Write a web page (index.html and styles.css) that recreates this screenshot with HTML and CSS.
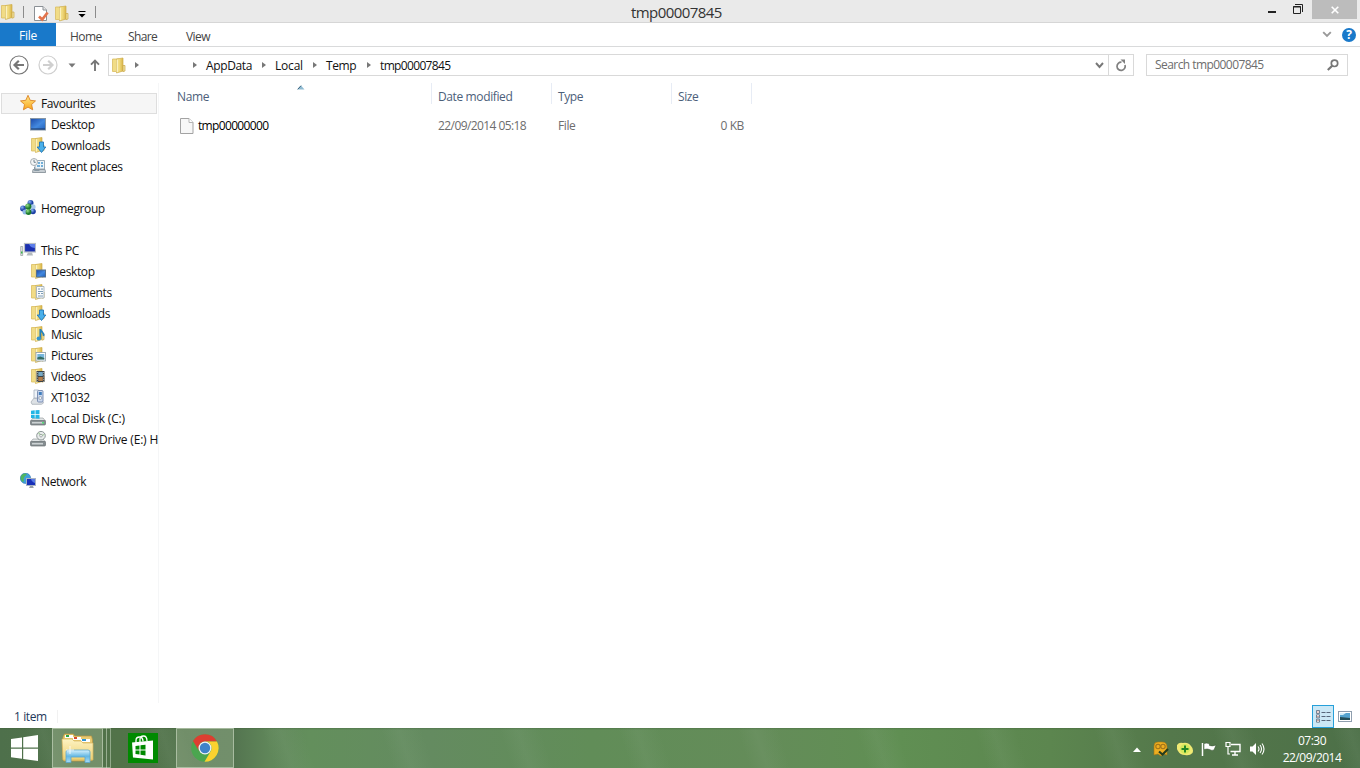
FILE: index.html
```
<!DOCTYPE html>
<html lang="en">
  <head>
    <meta charset="UTF-8" />
    <title>tmp00007845</title>
    <link rel="stylesheet" href="styles.css">
  </head>
  <body>
    <!-- shared icon parts -->
    <svg class="defs" width="0" height="0">
      <defs>
        <linearGradient id="gFolder" x1="0" x2="1">
          <stop offset="0" stop-color="#f8e896" />
          <stop offset="0.5" stop-color="#eed678" />
          <stop offset="1" stop-color="#d9b548" />
        </linearGradient>
        <linearGradient id="gScreen" x1="0" y1="0" x2="1" y2="1">
          <stop offset="0" stop-color="#1c49a8" />
          <stop offset="0.55" stop-color="#4389df" />
          <stop offset="1" stop-color="#205fb9" />
        </linearGradient>
        <linearGradient id="gStar" x1="0" y1="0" x2="0" y2="1">
          <stop offset="0" stop-color="#ffe98b" />
          <stop offset="1" stop-color="#f9a51b" />
        </linearGradient>
        <linearGradient id="gBig" x1="0" y1="0" x2="0" y2="1">
          <stop offset="0" stop-color="#fdf3c3" />
          <stop offset="1" stop-color="#edd072" />
        </linearGradient>
        <linearGradient id="gGlass" x1="0" y1="0" x2="0" y2="1">
          <stop offset="0" stop-color="#d8f2fd" />
          <stop offset="0.5" stop-color="#65b8e3" />
          <stop offset="1" stop-color="#a8dcf5" />
        </linearGradient>
        <radialGradient id="gBlue" cx="0.35" cy="0.3">
          <stop offset="0" stop-color="#8ab7f5" />
          <stop offset="1" stop-color="#1c3fa4" />
        </radialGradient>
        <radialGradient id="gGreen" cx="0.35" cy="0.3">
          <stop offset="0" stop-color="#98e087" />
          <stop offset="1" stop-color="#1c7a2c" />
        </radialGradient>
        <symbol id="folder" viewBox="0 0 16 16">
          <path d="M1.500 1.500h6.500v12.500H1.500z" fill="#f1dc86" stroke="#d9bd61" stroke-width=".8" />
          <path d="M5.500 1.500L12 .5v13l-6.500 2z" fill="url(#gFolder)" stroke="#cfae4c" stroke-width=".7" />
          <path d="M12 8h2v5.500l-2 .7z" fill="#f3e3a0" stroke="#c8a848" stroke-width=".7" />
          <path d="M6.200 2.200v12.300" stroke="#fffbe0" stroke-width=".9" />
        </symbol>
        <symbol id="arrowDown" viewBox="0 0 16 16">
          <path d="M9.500 5h4v5h2.300L11.500 15.500 7.200 10h2.300z" fill="#49b0ea" stroke="#2176b8" stroke-width=".9" />
        </symbol>
        <symbol id="drive" viewBox="0 0 16 16">
          <path d="M3 8h10l2.500 3h-15z" fill="#e2e5e6" stroke="#8c9193" stroke-width=".6" />
          <rect x=".5" y="10.500" width="15" height="4.500" rx="1" fill="#858d90" stroke="#6a7174" stroke-width=".7" />
          <path d="M2 12.700h11" stroke="#cdd2d4" stroke-width="1.600" />
        </symbol>
      </defs>
    </svg>

    <div class="titlebar">
      <div class="quick">
        <svg class="q-folder" width="16" height="18"><use href="#folder" width="16" height="18" /></svg>
        <span class="sep"></span>
        <svg class="q-props" width="16" height="17" viewBox="0 0 16 17">
          <path d="M1.500 1.500h8.500l3.500 3.500v10.500h-12z" fill="#fff" stroke="#8b9095" />
          <path d="M10 1.500v3.500h3.500" fill="#e6e6e6" stroke="#8b9095" />
          <path d="M6 11.500l3.200 3L14.600 7.500" fill="none" stroke="#e3744c" stroke-width="2.700" />
        </svg>
        <svg class="q-new" width="16" height="17"><use href="#folder" width="16" height="17" /></svg>
        <svg class="q-more" width="8" height="7" viewBox="0 0 8 7">
          <path d="M.5.5h7" stroke="#000" />
          <path d="M.5 3h7L4 6.500z" />
        </svg>
        <span class="sep"></span>
      </div>
      <div class="title">tmp00007845</div>
      <div class="win-buttons">
        <svg class="min" width="8" height="2"><rect width="8" height="2" fill="#222" /></svg>
        <svg class="max" width="10" height="10" viewBox="0 0 10 10">
          <path d="M.5 2.500h7v7h-7zM0 3h8" fill="none" stroke="#222" />
          <path d="M2 .5h7.500V8" fill="none" stroke="#222" />
        </svg>
        <button class="close">
          <svg width="8" height="8" viewBox="0 0 8 8"><path d="M.7.7l6.600 6.600M7.300.7L.7 7.300" stroke="#fff" stroke-width="1.600" /></svg>
        </button>
      </div>
    </div>

    <div class="ribbon">
      <div class="tab file">File</div>
      <div class="tab home">Home</div>
      <div class="tab share">Share</div>
      <div class="tab view">View</div>
      <div class="ribbon-right">
        <svg width="10" height="7" viewBox="0 0 10 7"><path d="M1.200 1.200L5 5l3.800-3.800" fill="none" stroke="#999" stroke-width="1.900" /></svg>
        <span class="help">?</span>
      </div>
    </div>

    <div class="navbar">
      <div class="nav-buttons">
        <svg class="back" width="20" height="20" viewBox="0 0 20 20">
          <circle cx="10" cy="10" r="9" fill="none" stroke="#777" stroke-width="1.200" />
          <path d="M15 10H6M9.800 5.700L5.500 10l4.300 4.300" fill="none" stroke="#777" stroke-width="2.200" />
        </svg>
        <svg class="forward" width="20" height="20" viewBox="0 0 20 20">
          <circle cx="10" cy="10" r="9" fill="none" stroke="#cfcfcf" stroke-width="1.200" />
          <path d="M5 10h9M10.200 5.700l4.300 4.300-4.300 4.300" fill="none" stroke="#cfcfcf" stroke-width="2.200" />
        </svg>
        <svg class="history" width="8" height="5" viewBox="0 0 8 5"><path d="M.5.5h7L4 4.500z" fill="#777" /></svg>
        <svg class="up" width="10" height="12" viewBox="0 0 10 12"><path d="M5 12V2M1 5.700L5 1.700l4 4" fill="none" stroke="#777" stroke-width="1.900" /></svg>
      </div>
      <div class="address">
        <svg class="a-folder" width="16" height="17"><use href="#folder" width="16" height="17" /></svg>
        <i class="arrow first"></i>
        <i class="arrow second"></i>
        <span class="crumb c1">AppData</span><i class="arrow"></i>
        <span class="crumb c2">Local</span><i class="arrow"></i>
        <span class="crumb c3">Temp</span><i class="arrow"></i>
        <span class="crumb c4">tmp00007845</span>
        <div class="address-end">
          <svg class="drop" width="9" height="7" viewBox="0 0 9 7"><path d="M1 1l3.500 4L8 1" fill="none" stroke="#777" stroke-width="1.900" /></svg>
          <div class="refresh">
            <svg width="12" height="13" viewBox="0 0 12 13">
              <path d="M6.500 3.200A4.100 4.100 0 1 0 10 6" fill="none" stroke="#808080" stroke-width="1.700" />
              <path d="M5.500.5h4.500v4.500z" fill="#808080" />
            </svg>
          </div>
        </div>
      </div>
      <div class="search">
        <span>Search tmp00007845</span>
        <svg width="12" height="12" viewBox="0 0 12 12">
          <circle cx="7.500" cy="4.300" r="3.200" fill="none" stroke="#777" stroke-width="1.700" />
          <path d="M5.200 6.700L.8 11" stroke="#777" stroke-width="2.200" />
        </svg>
      </div>
    </div>

    <div class="main">
      <div class="sidebar">
        <div class="item root selected">
          <svg width="16" height="16" viewBox="0 0 16 16"><path d="M8 .3l2.200 5 5.300.6-3.900 3.600 1.100 5.300L8 12.100l-4.600 2.700 1.100-5.300L.5 5.900l5.300-.6z" fill="url(#gStar)" stroke="#dc8426" stroke-width=".9" /></svg>
          <span>Favourites</span>
        </div>
        <div class="item">
          <svg width="16" height="16" viewBox="0 0 16 16"><rect x=".5" y="2.500" width="15" height="11.500" fill="url(#gScreen)" stroke="#8595a5" /><path d="M1 13h14" stroke="#193766" /></svg>
          <span>Desktop</span>
        </div>
        <div class="item">
          <svg width="16" height="16"><use href="#folder" /><use href="#arrowDown" /></svg>
          <span>Downloads</span>
        </div>
        <div class="item">
          <svg width="16" height="16" viewBox="0 0 16 16">
            <path d="M5 2.500h9.500v8.500H5z" fill="#edf4f8" stroke="#8598a5" stroke-width=".8" />
            <path d="M8 5h2m1 0h2M7 8h3m1 0h2" stroke="#4897cc" stroke-width="1.400" />
            <path d="M3 11.500h12l.7 3H2.500z" fill="#c7ced3" stroke="#7e8990" stroke-width=".8" />
            <circle cx="4" cy="4" r="3.500" fill="#f3f5f6" stroke="#a0a8ad" stroke-width=".9" />
            <path d="M4 1.800v2.500h1.800" fill="none" stroke="#526773" stroke-width=".8" />
            <path d="M4.500 9v3.500h5" fill="none" stroke="#899aa5" />
          </svg>
          <span>Recent places</span>
        </div>

        <div class="item root group">
          <svg width="16" height="16" viewBox="0 0 16 16">
            <circle cx="10.500" cy="3" r="3" fill="url(#gBlue)" />
            <circle cx="3" cy="8.500" r="2.900" fill="url(#gBlue)" />
            <circle cx="12.900" cy="7" r="2.700" fill="#a9c9e9" />
            <circle cx="13" cy="11.500" r="2.800" fill="url(#gBlue)" />
            <circle cx="5" cy="12" r="2.500" fill="#8fb8e6" />
            <circle cx="8.300" cy="6.600" r="3.100" fill="url(#gGreen)" />
            <circle cx="8.500" cy="12" r="2.900" fill="url(#gGreen)" />
          </svg>
          <span>Homegroup</span>
        </div>

        <div class="item root group">
          <svg width="16" height="16" viewBox="0 0 16 16">
            <path d="M.7 4.500h2v9h-2z" fill="#e3e6e6" stroke="#8f9898" stroke-width=".7" /><path d="M1 10.500h1.500" stroke="#37b44a" stroke-width="2" />
            <rect x="4.500" y="1.500" width="11" height="8.500" fill="#1a2fae" stroke="#b7bdc5" stroke-width="1.200" />
            <path d="M9 2h6v4c-2 0-5-1-6-4z" fill="#5c7dea" />
            <path d="M8 10.500h4l1 3H6.500z" fill="#b3b9be" />
          </svg>
          <span>This PC</span>
        </div>
        <div class="item">
          <svg width="16" height="16" viewBox="0 0 16 16"><use href="#folder" /><rect x="6.500" y="7" width="9" height="7" fill="url(#gScreen)" stroke="#55718f" /></svg>
          <span>Desktop</span>
        </div>
        <div class="item">
          <svg width="16" height="16" viewBox="0 0 16 16"><use href="#folder" /><path d="M6.500 2.500h7.500v11.500H6.500z" fill="#f9fbfc" stroke="#9aa9b5" stroke-width=".8" /><path d="M8 5h2m1 0h2M8 7.500h5M8 9.500h2m1 0h2M8 12h5" stroke="#6d91ae" stroke-width=".9" /></svg>
          <span>Documents</span>
        </div>
        <div class="item">
          <svg width="16" height="16"><use href="#folder" /><use href="#arrowDown" /></svg>
          <span>Downloads</span>
        </div>
        <div class="item">
          <svg width="16" height="16" viewBox="0 0 16 16"><use href="#folder" /><path d="M10.300 12.500V3c.3 2.500 4.500 3.500 3.200 7" fill="none" stroke="#2782ba" stroke-width="1.700" /><ellipse cx="8.900" cy="12.500" rx="2.300" ry="1.900" fill="#3495ce" /></svg>
          <span>Music</span>
        </div>
        <div class="item">
          <svg width="16" height="16" viewBox="0 0 16 16"><use href="#folder" /><rect x="6" y="5.500" width="9.500" height="8.500" fill="#fff" stroke="#8b9ba6" stroke-width=".8" /><path d="M7.300 7h7v5.500h-7z" fill="#75b6dc" /><path d="M7.300 10.500l3-1 4 1.500v1.500h-7z" fill="#346c61" /></svg>
          <span>Pictures</span>
        </div>
        <div class="item">
          <svg width="16" height="16" viewBox="0 0 16 16"><use href="#folder" /><path d="M6.500 3h8v11h-8z" fill="#3c4347" /><path d="M8.300 4h4.500v4H8.300z" fill="#75a9c5" /><path d="M8.300 9h4.500v4H8.300z" fill="#b27d4a" /><path d="M7.300 4v10M13.700 4v10" stroke="#d2d6d6" stroke-dasharray="1 1.300" stroke-width=".8" /></svg>
          <span>Videos</span>
        </div>
        <div class="item">
          <svg width="16" height="16" viewBox="0 0 16 16">
            <path d="M1 13l3-4 8 2 1.500 3-2 1.300H2z" fill="#dde1e5" stroke="#a1a8b0" stroke-width=".7" />
            <path d="M4 1h4.500v8H4z" fill="#eff3f8" stroke="#a4afbd" stroke-width=".8" />
            <rect x="7.500" y="1.500" width="5.500" height="11.500" rx="1" fill="#cbd8ee" stroke="#7488ad" stroke-width=".9" />
            <path d="M8.800 3h3v3h-3z" fill="#407fbd" /><circle cx="10.300" cy="9" r="1.500" fill="#f1f5fa" stroke="#77818e" stroke-width=".6" />
          </svg>
          <span>XT1032</span>
        </div>
        <div class="item wide">
          <svg width="16" height="16" viewBox="0 0 16 16"><use href="#drive" /><path d="M1 .8l3.700-.5v3.700H1zM5.500.2l4-.2v4h-4zM1 4.800h3.700v3.700L1 8zM5.500 4.800h4v4l-4-.3z" fill="#22b5e5" /><path d="M12 12.700h2" stroke="#54df78" stroke-width="1.500" /></svg>
          <span>Local Disk (C:)</span>
        </div>
        <div class="item wide">
          <svg width="16" height="16" viewBox="0 0 16 16"><use href="#drive" /><circle cx="11" cy="4.700" r="4.300" fill="#e8ebeb" stroke="#858d8e" stroke-width=".9" /><path d="M11 4.700L8.500 1.700M11 4.700l3.500-1.200" stroke="#a8cda1" stroke-width="1.300" /><circle cx="11" cy="4.700" r="1.300" fill="#fff" stroke="#858d8e" stroke-width=".7" /></svg>
          <span>DVD RW Drive (E:) H</span>
        </div>

        <div class="item root group">
          <svg width="16" height="16" viewBox="0 0 16 16">
            <circle cx="5.500" cy="5.300" r="5.200" fill="#3f9fdc" stroke="#2467a8" stroke-width=".5" />
            <path d="M1 3c1-2 3-2.700 5-2.500 1.500 1 .5 2-1 2.500C4 5 3 6 4 8l-1 1C1 8 0 6 1 3z" fill="#4fb660" /><path d="M6 5l2 0v4l-2 1z" fill="#43a958" />
            <rect x="6.500" y="5.500" width="9" height="7" fill="#1830b8" stroke="#a9b3c2" />
            <path d="M11 6h4v4c-2-.5-3.500-2-4-4z" fill="#587be6" /><path d="M10 13h3l.8 2H9z" fill="#9ba2a8" />
          </svg>
          <span>Network</span>
        </div>
      </div>

      <div class="files">
        <div class="file-head">
          <div class="col">Name
            <svg class="sort" width="8" height="5" viewBox="0 0 8 5"><path d="M.5 4.500L4 .5l3.500 4z" fill="#8fbbd2" /><path d="M.7 4.300L4 .7" stroke="#365f7a" /></svg>
          </div>
          <div class="col">Date modified</div>
          <div class="col">Type</div>
          <div class="col">Size</div>
        </div>
        <div class="file-row">
          <div class="name">
            <svg width="14" height="16" viewBox="0 0 14 16"><path d="M.5.500h8.500l4 4v11H.5z" fill="#f7f7f7" stroke="#a3a3a3" /><path d="M9 .5v4h4" fill="#fff" stroke="#b5b5b5" /></svg>
            <span>tmp00000000</span>
          </div>
          <div class="date">22/09/2014 05:18</div>
          <div>File</div>
          <div class="size">0 KB</div>
        </div>
      </div>
    </div>

    <div class="status">
      <span class="count">1 item</span>
      <div class="views">
        <div class="view-btn active">
          <svg width="15" height="13" viewBox="0 0 15 13">
            <path d="M.5.500h3v3h-3zM.5 4.800h3v3h-3zM.5 9.200h3v3h-3z" fill="#fff" stroke="#58677b" stroke-width=".8" />
            <path d="M2 1.500v1M2 6v1M2 10v1" stroke="#a44f43" />
            <path d="M5.500 2.500h4m1 0h4M5.500 6.500h4m1 0h4M5.500 10.500h4m1 0h4" stroke="#58677b" />
          </svg>
        </div>
        <svg class="thumb" width="14" height="11" viewBox="0 0 14 11">
          <rect x=".5" y=".5" width="13" height="10" fill="#fff" stroke="#8f9eae" />
          <path d="M2 2h10v7H2z" fill="#55a3ce" /><path d="M2 2h6l-3 2H2z" fill="#d5edf8" /><path d="M2 6l10 1v2H2z" fill="#254e57" />
        </svg>
      </div>
    </div>

    <div class="taskbar">
      <div class="task start">
        <svg width="27" height="26" viewBox="0 0 27 26"><path d="M0 4l11-1.600V12.500H0zM12.200 2.200L27 0v12.500H12.200zM0 13.700h11v10.100L0 22.200zM12.200 13.700H27V26l-14.800-2z" fill="#fff" /></svg>
      </div>
      <div class="task explorer">
        <svg width="34" height="32" viewBox="0 0 34 32">
          <path d="M2 5l1.500-3h9l1 2h17l1 4v20l-2 1H3l-1-2z" fill="#e9ca70" stroke="#bd9740" stroke-width=".7" />
          <path d="M4 3h8v3H4zM12 5h8v3h-8zM20 7h9v3h-9z" fill="#fff" />
          <path d="M5 3h3v2H5z" fill="#2ea547" /><path d="M13 5h3v2h-3z" fill="#d84a30" /><path d="M21 7h4v2h-4z" fill="#3194d1" />
          <path d="M1 7h10l2 2h7l2 2h10v17H2z" fill="url(#gBig)" stroke="#d6b55d" stroke-width=".7" />
          <path d="M5 30.500V20q0-2 2-2h20q2 0 2 2v10.500h-5V25H10v5.500z" fill="url(#gGlass)" stroke="#5ba6cd" stroke-width=".8" />
          <path d="M9 14v8M5 18h8" stroke="#fff" stroke-width=".8" />
        </svg>
      </div>
      <div class="stack"></div>
      <div class="task store">
        <svg width="30" height="30" viewBox="0 0 30 30">
          <rect width="30" height="30" fill="#008a00" />
          <path d="M4 9.500L25 7.500v19L5 24.500z" fill="#fff" />
          <path d="M8 10V7.500Q8 4 11.500 4T15 8.500M12 9V6.500Q12 3 15.500 3T19 8" fill="none" stroke="#fff" stroke-width="1.300" />
          <path d="M7.500 13l4-.5v4h-4zM12.500 12.300l5-.6v4.800h-5zM7.500 17.500h4v4l-4-.5zM12.500 17.500h5v5l-5-.7z" fill="#008a00" />
        </svg>
      </div>
      <div class="task chrome">
        <svg width="28" height="28" viewBox="0 0 28 28">
          <circle cx="14" cy="14" r="13.800" fill="#4ba64f" />
          <path d="M2 7.100A13.800 13.800 0 0 1 26 7.500H14a6.500 6.500 0 0 0-5.700 9.700z" fill="#dd3e31" />
          <path d="M26 7.500A13.800 13.800 0 0 1 13.500 27.800l6.200-10.500A6.500 6.500 0 0 0 14 7.500z" fill="#fbd22f" />
          <circle cx="14" cy="14" r="6.500" fill="#f3f3f3" />
          <circle cx="14" cy="14" r="5.200" fill="#3f83c9" />
        </svg>
      </div>

      <div class="tray">
        <svg width="8" height="5" viewBox="0 0 8 5"><path d="M0 5l4-4.500L8 5z" fill="#fff" /></svg>
        <svg width="16" height="16" viewBox="0 0 16 16">
          <path d="M1 5q0-4 4-4h4q5 0 5 5v8l-3-1-3 2-3-2-4 1z" fill="#edae21" stroke="#a87610" stroke-width=".6" />
          <circle cx="5" cy="5.500" r="2.200" fill="none" stroke="#a1731a" stroke-width="1.100" /><circle cx="10" cy="5.500" r="2.200" fill="none" stroke="#a1731a" stroke-width="1.100" />
          <path d="M6 10.500l3.500 3L15 8" fill="none" stroke="#263c1c" stroke-width="2.200" />
        </svg>
        <svg width="16" height="16" viewBox="0 0 16 16">
          <path d="M0 4q2-3 6-2 5-1 8 3 3 3 1.500 7-3 3-7.500 2-5 0-7-4-2-3-1-6z" fill="#f0ea73" />
          <circle cx="8" cy="8" r="5" fill="#d5e85c" /><path d="M8 4.500v7M4.500 8h7" stroke="#248526" stroke-width="2" />
        </svg>
        <svg width="16" height="16" viewBox="0 0 16 16"><path d="M1.500 2v13" stroke="#fff" stroke-width="1.500" /><path d="M3 2.500q3-1 5.500.5v1.500q3 1 6.500-.5l-2 5q-2 1-4.500-.5-2-1-5.500 0z" fill="#fff" stroke="#2d4829" stroke-width=".5" /></svg>
        <svg width="16" height="16" viewBox="0 0 16 16"><path d="M6 3.500h9v7H5.500M7 14h6M10 10.500V14" fill="none" stroke="#fff" stroke-width="1.400" /><path d="M1 1.500h4v4H1zM3 5.500V13h2" fill="none" stroke="#fff" stroke-width="1.200" /></svg>
        <svg width="16" height="16" viewBox="0 0 16 16"><path d="M1 5.500h2.500L7 2v12l-3.500-3.500H1z" fill="#fff" /><path d="M9 5.500q2 2.500 0 5M11 4q3 4 0 8M13 2.500q4 5.500 0 11" fill="none" stroke="#fff" stroke-width="1.100" /></svg>
      </div>
      <div class="clock">
        <div class="time">07:30</div>
        <div class="day">22/09/2014</div>
      </div>
    </div>
  </body>
</html>
```

FILE: styles.css
```
* {
  box-sizing: border-box;
}

body {
  margin: 0;
  width: 1360px;
  height: 768px;
  overflow: hidden;
  display: flex;
  flex-direction: column;
  background: #fff;
  color: #111;
  font-family: "Open Sans", "Noto Sans", sans-serif;
  font-size: 12px;
  line-height: 20px;
  letter-spacing: -0.38px;
  white-space: nowrap;
}

svg {
  display: block;
  flex: none;
}

.defs {
  position: absolute;
}

/* title bar */
.titlebar {
  height: 23px;
  flex: none;
  display: grid;
  grid-template-columns: 120px 1fr 128px;
  background: #eaeaea;
  border-bottom: 1px solid #d6d6d6;
}

.quick {
  display: flex;
  align-items: center;
}

.sep {
  width: 1px;
  height: 12px;
  background: #8b8b8b;
}

.q-folder {
  margin-right: 7px;
}

.q-props {
  margin: 2px 5px 0 9px;
}

.q-new {
  margin: 2px 8px 0 0;
}

.q-more {
  margin: 4px 9px 0 0;
}

.title {
  font-size: 15px;
  letter-spacing: -0.57px;
  line-height: 24px;
  color: #333;
  padding-left: 511px;
}

.win-buttons {
  display: flex;
  align-items: flex-start;
}

.min {
  margin: 11px 17px 0 36px;
}

.max {
  margin: 4px 9px 0 0;
}

.close {
  width: 45px;
  height: 19px;
  padding: 0;
  border: none;
  background: #bcbcbc;
  display: flex;
  align-items: center;
  justify-content: center;
}

/* ribbon tabs */
.ribbon {
  height: 24px;
  flex: none;
  display: flex;
  border-bottom: 1px solid #d9dadb;
}

.tab {
  color: #444;
  line-height: 27px;
  letter-spacing: -0.55px;
}

.file {
  width: 56px;
  background: #1979ca;
  color: #fff;
  text-align: center;
  line-height: 25px;
  letter-spacing: -0.2px;
}

.home {
  margin-left: 14px;
  width: 58px;
}

.share {
  width: 58px;
  letter-spacing: -0.65px;
}

.ribbon-right {
  margin-left: auto;
  display: flex;
  align-items: center;
  gap: 10px;
  padding-right: 4px;
}

.help {
  width: 14px;
  height: 14px;
  border-radius: 50%;
  background: #1979ca;
  color: #fff;
  font-weight: 700;
  line-height: 14px;
  text-align: center;
}

/* navigation and address */
.navbar {
  height: 36px;
  flex: none;
  display: flex;
  align-items: center;
}

.nav-buttons {
  width: 108px;
  display: flex;
  align-items: center;
  padding-left: 9px;
}

.forward {
  margin: 0 10px 0 9px;
}

.up {
  margin-left: 14px;
}

.address {
  width: 1026px;
  height: 22px;
  border: 1px solid #d9d9d9;
  display: flex;
  align-items: center;
}

.a-folder {
  margin-left: 2px;
}

.arrow {
  border: 3.5px solid transparent;
  border-left: 4px solid #777;
  border-right: 0;
}

.arrow.first {
  margin-left: 8px;
}

.arrow.second {
  margin-left: 54px;
}

.crumb {
  margin-left: 9px;
  line-height: 21px;
}

.c1 {
  width: 56px;
}

.c2 {
  width: 38px;
  letter-spacing: -0.2px;
}

.c3 {
  width: 41px;
}

.c4 {
  width: 80px;
  letter-spacing: -0.65px;
}

.address-end {
  margin-left: auto;
  height: 100%;
  display: flex;
  align-items: center;
}

.drop {
  margin: 1px 4px 0 0;
}

.refresh {
  width: 25px;
  height: 100%;
  border-left: 1px solid #d9d9d9;
  display: flex;
  align-items: center;
  justify-content: center;
}

.search {
  margin-left: 12px;
  width: 202px;
  height: 22px;
  border: 1px solid #d9d9d9;
  padding: 0 8px;
  display: flex;
  align-items: center;
  justify-content: space-between;
  color: #6d6d6d;
  letter-spacing: -0.56px;
}

/* folder tree and file list */
.main {
  height: 620px;
  flex: none;
  display: flex;
}

.sidebar {
  width: 159px;
  padding: 10px 1px 0;
  border-right: 1px solid #f5f6f7;
  overflow: hidden;
}

.item {
  height: 21px;
  padding-left: 29px;
  display: flex;
  align-items: center;
  gap: 5px;
}

.item span {
  line-height: 21px;
}

.item svg {
  margin-bottom: 1px;
}

.item.wide {
  letter-spacing: -0.19px;
}

.item.root {
  padding-left: 19px;
}

.item.selected {
  width: 156px;
  padding-left: 18px;
  background: #f6f6f6;
  border: 1px solid #dedede;
}

.item.group {
  margin-top: 21px;
}

.file-head,
.file-row {
  display: grid;
  grid-template-columns: 273px 120px 120px 80px;
}

.file-head {
  height: 21px;
  color: #4c607a;
}

.col {
  position: relative;
  height: 21px;
  border-right: 1px solid #e7ecf5;
  padding-left: 6px;
  line-height: 28px;
}

.col:first-child {
  padding-left: 18px;
}

.sort {
  position: absolute;
  top: 2px;
  left: 138px;
}

.file-row {
  height: 22px;
  margin-top: 11px;
  line-height: 22px;
  color: #6d6d6d;
}

.file-row > div {
  padding-left: 6px;
}

.file-row .name {
  display: flex;
  align-items: center;
  gap: 4px;
  padding-left: 21px;
  color: #000;
  letter-spacing: -0.66px;
}

.file-row .date {
  letter-spacing: -0.58px;
}

.file-row .size {
  text-align: right;
  padding-right: 8px;
}

/* status bar */
.status {
  height: 25px;
  flex: none;
  display: flex;
  align-items: center;
  justify-content: space-between;
  padding: 2px 8px 0 14px;
  color: #1e395b;
}

.count {
  width: 44px;
  height: 13px;
  line-height: 14px;
  border-right: 1px solid #f1f1f1;
}

.views {
  display: flex;
  align-items: center;
  gap: 4px;
}

.view-btn {
  width: 22px;
  height: 23px;
  display: flex;
  align-items: center;
  justify-content: center;
}

.view-btn.active {
  background: #cbe8f6;
  border: 1px solid #26a0da;
}

/* taskbar */
.taskbar {
  height: 40px;
  flex: none;
  display: flex;
  align-items: center;
  color: #fff;
  background:
    linear-gradient(180deg, rgba(54, 83, 47, 0.35), transparent 2px),
    repeating-linear-gradient(72deg, transparent 0 35px, rgba(153, 179, 153, 0.11) 52px, transparent 74px 113px),
    linear-gradient(90deg, #4e704b 0, #527349 120px, #547550 235px, #60875a 270px, #638f5c 310px, #648b60 430px, #618d58 590px, #648c59 760px, #608f53 900px, #5c864f 1050px, #54784b 1170px, #4d7048 1360px);
}

.task {
  height: 40px;
  display: flex;
  align-items: center;
  justify-content: center;
}

.start {
  width: 52px;
  padding-right: 3px;
}

.explorer {
  width: 51px;
  background: rgba(194, 213, 180, 0.3);
  border: 1px solid rgba(221, 234, 214, 0.5);
}

.stack {
  width: 8px;
  height: 40px;
  border: 1px solid rgba(221, 234, 214, 0.45);
  border-left: 0;
  background: linear-gradient(90deg, transparent 3px, rgba(221, 234, 214, 0.5) 3px 4px, transparent 4px);
}

.store {
  margin: 0 18px 0 17px;
}

.chrome {
  width: 58px;
  padding-right: 1px;
  background: rgba(194, 213, 180, 0.28);
  border: 1px solid rgba(221, 234, 214, 0.5);
}

.tray {
  margin-left: auto;
  display: flex;
  align-items: center;
  gap: 8px;
  padding-top: 2px;
}

.tray svg:first-child {
  margin-right: 4px;
}

.clock {
  width: 95px;
  padding: 2px 1px 0 0;
  text-align: center;
  line-height: 17px;
  letter-spacing: -0.5px;
}
```
